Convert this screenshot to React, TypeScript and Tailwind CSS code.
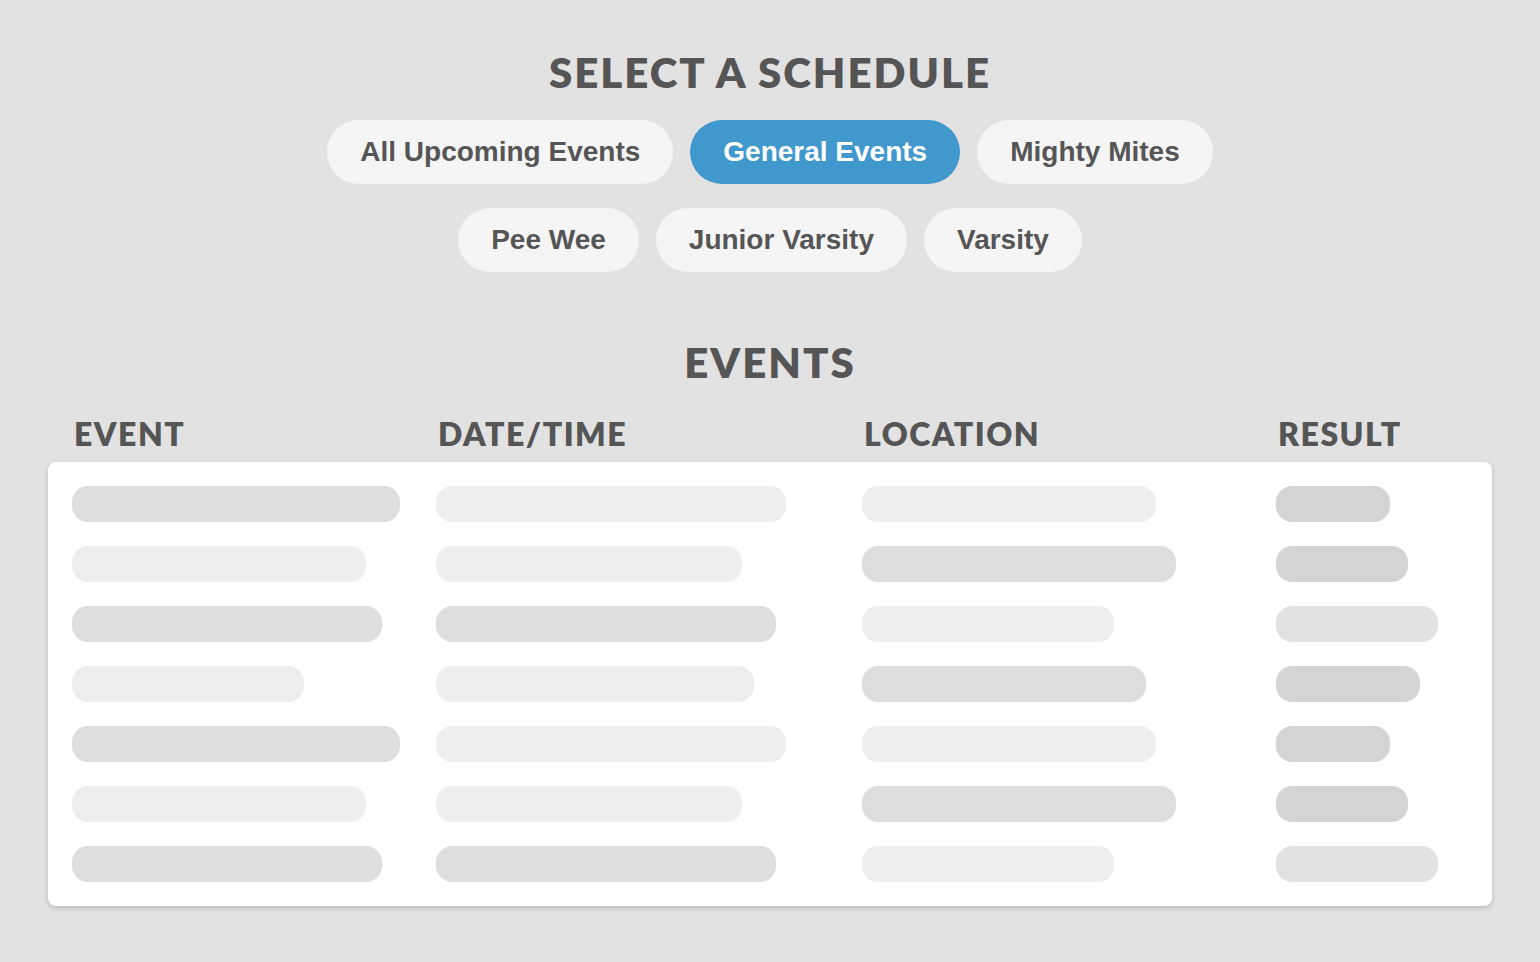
const rowsTop = ["All Upcoming Events", "General Events", "Mighty Mites"];
const rowsBottom = ["Pee Wee", "Junior Varsity", "Varsity"];

const columns = ["EVENT", "DATE/TIME", "LOCATION", "RESULT"];

// widths in px, tone: d = dark, l = light, r = result dark, rl = result light
const skeleton: [number, string][][] = [
  [[328, "d"], [350, "l"], [294, "l"], [114, "r"]],
  [[294, "l"], [306, "l"], [314, "d"], [132, "r"]],
  [[310, "d"], [340, "d"], [252, "l"], [162, "rl"]],
  [[232, "l"], [318, "l"], [284, "d"], [144, "r"]],
  [[328, "d"], [350, "l"], [294, "l"], [114, "r"]],
  [[294, "l"], [306, "l"], [314, "d"], [132, "r"]],
  [[310, "d"], [340, "d"], [252, "l"], [162, "rl"]],
];

const tones: Record<string, string> = {
  d: "bg-[#dedede]",
  l: "bg-[#eeeeee]",
  r: "bg-[#d4d4d4]",
  rl: "bg-[#e2e2e2]",
};

const headingFont = { fontFamily: "Lato, 'Open Sans', sans-serif" };

const Pill = ({ label, active }: { label: string; active?: boolean }) => (
  <button
    className={`h-16 px-[33px] rounded-full text-[28px] font-bold ${
      active ? "bg-[#4198cc] text-white" : "bg-[#f5f5f5] text-[#555555]"
    }`}
  >
    {label}
  </button>
);

const App = () => {
  return (
    <div className="min-h-[962px] bg-[#e2e2e2] pt-[48px] pb-14 font-['Liberation_Sans',Arial,sans-serif]">
      <h1
        className="text-center text-[42px] leading-[48px] font-extrabold tracking-[2px] text-[#555555]"
        style={headingFont}
      >
        SELECT A SCHEDULE
      </h1>

      <div className="mt-[24px] flex flex-col items-center gap-6">
        <div className="flex gap-[17px]">
          {rowsTop.map((r) => (
            <Pill key={r} label={r} active={r === "General Events"} />
          ))}
        </div>
        <div className="flex gap-[17px]">
          {rowsBottom.map((r) => (
            <Pill key={r} label={r} />
          ))}
        </div>
      </div>

      <h2
        className="mt-[66px] text-center text-[42px] leading-[48px] font-extrabold tracking-[2px] text-[#555555]"
        style={headingFont}
      >
        EVENTS
      </h2>

      <div className="mx-[48px]">
        <div
          className="mt-[28px] grid grid-cols-[364px_426px_414px_1fr] pl-[26px] pr-6 pb-[8px] text-[32px] leading-[40px] font-extrabold tracking-[1.5px] text-[#555555]"
          style={headingFont}
        >
          {columns.map((c) => (
            <div key={c}>{c}</div>
          ))}
        </div>

        <div className="bg-white rounded-lg shadow-[0_2px_5px_rgba(0,0,0,0.18)] px-6 py-6 flex flex-col gap-6">
          {skeleton.map((row, i) => (
            <div key={i} className="grid grid-cols-[364px_426px_414px_1fr]">
              {row.map(([w, t], j) => (
                <div
                  key={j}
                  className={`h-9 rounded-2xl ${tones[t]}`}
                  style={{ width: w }}
                />
              ))}
            </div>
          ))}
        </div>
      </div>
    </div>
  );
};

export default App;
